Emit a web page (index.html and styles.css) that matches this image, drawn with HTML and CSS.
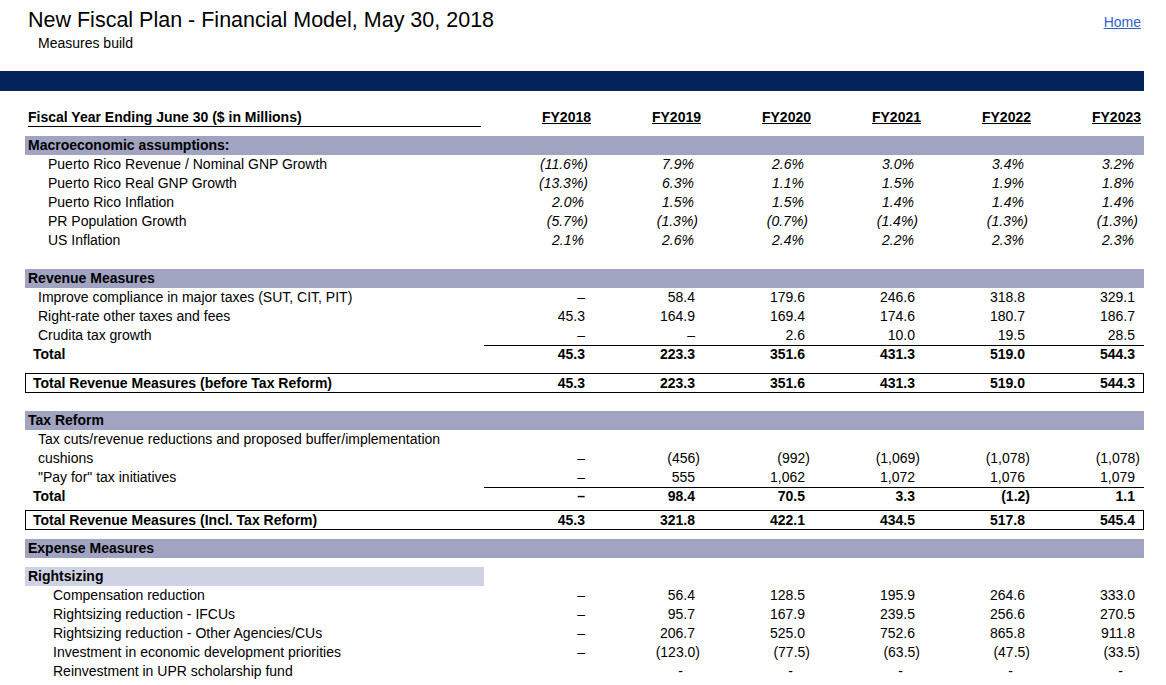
FILE: index.html
```html
<!DOCTYPE html>
<html lang="en">
<head>
<meta charset="utf-8">
<title>New Fiscal Plan - Financial Model</title>
<link rel="stylesheet" href="styles.css">
</head>
<body>
<div class="page">
  <header class="top">
    <div class="titles">
      <h1>New Fiscal Plan - Financial Model, May 30, 2018</h1>
      <p class="sub">Measures build</p>
    </div>
    <a class="home" href="#">Home</a>
  </header>
  <div class="bar"></div>

  <table class="model">
    <colgroup>
      <col class="c-label"><col class="c-num"><col class="c-num"><col class="c-num"><col class="c-num"><col class="c-num"><col class="c-num">
    </colgroup>
    <thead>
      <tr class="head">
        <th class="lab"><div class="rule">Fiscal Year Ending June 30 ($ in Millions)</div></th>
        <th class="fy">FY2018</th><th class="fy">FY2019</th><th class="fy">FY2020</th><th class="fy">FY2021</th><th class="fy">FY2022</th><th class="fy">FY2023</th>
      </tr>
    </thead>
    <tbody>
      <tr class="gap g9"><td colspan="7"></td></tr>
      <tr class="band"><td class="lab">Macroeconomic assumptions:</td><td></td><td></td><td></td><td></td><td></td><td></td></tr>
      <tr class="pct i2"><td class="lab">Puerto Rico Revenue / Nominal GNP Growth</td><td class="neg">(11.6%)</td><td>7.9%</td><td>2.6%</td><td>3.0%</td><td>3.4%</td><td>3.2%</td></tr>
      <tr class="pct i2"><td class="lab">Puerto Rico Real GNP Growth</td><td class="neg">(13.3%)</td><td>6.3%</td><td>1.1%</td><td>1.5%</td><td>1.9%</td><td>1.8%</td></tr>
      <tr class="pct i2"><td class="lab">Puerto Rico Inflation</td><td>2.0%</td><td>1.5%</td><td>1.5%</td><td>1.4%</td><td>1.4%</td><td>1.4%</td></tr>
      <tr class="pct i2"><td class="lab">PR Population Growth</td><td class="neg">(5.7%)</td><td class="neg">(1.3%)</td><td class="neg">(0.7%)</td><td class="neg">(1.4%)</td><td class="neg">(1.3%)</td><td class="neg">(1.3%)</td></tr>
      <tr class="pct i2"><td class="lab">US Inflation</td><td>2.1%</td><td>2.6%</td><td>2.4%</td><td>2.2%</td><td>2.3%</td><td>2.3%</td></tr>

      <tr class="gap g19"><td colspan="7"></td></tr>
      <tr class="band"><td class="lab">Revenue Measures</td><td></td><td></td><td></td><td></td><td></td><td></td></tr>
      <tr class="i1"><td class="lab">Improve compliance in major taxes (SUT, CIT, PIT)</td><td>–</td><td>58.4</td><td>179.6</td><td>246.6</td><td>318.8</td><td>329.1</td></tr>
      <tr class="i1"><td class="lab">Right-rate other taxes and fees</td><td>45.3</td><td>164.9</td><td>169.4</td><td>174.6</td><td>180.7</td><td>186.7</td></tr>
      <tr class="i1"><td class="lab">Crudita tax growth</td><td>–</td><td>–</td><td>2.6</td><td>10.0</td><td>19.5</td><td>28.5</td></tr>
      <tr class="total"><td class="lab">Total</td><td>45.3</td><td>223.3</td><td>351.6</td><td>431.3</td><td>519.0</td><td>544.3</td></tr>
      <tr class="gap g9"><td colspan="7"></td></tr>
      <tr class="boxed"><td class="lab">Total Revenue Measures (before Tax Reform)</td><td>45.3</td><td>223.3</td><td>351.6</td><td>431.3</td><td>519.0</td><td>544.3</td></tr>

      <tr class="gap g18"><td colspan="7"></td></tr>
      <tr class="band"><td class="lab">Tax Reform</td><td></td><td></td><td></td><td></td><td></td><td></td></tr>
      <tr class="i1 two"><td class="lab">Tax cuts/revenue reductions and proposed buffer/implementation<br>cushions</td><td>–</td><td class="neg">(456)</td><td class="neg">(992)</td><td class="neg">(1,069)</td><td class="neg">(1,078)</td><td class="neg">(1,078)</td></tr>
      <tr class="i1"><td class="lab">"Pay for" tax initiatives</td><td>–</td><td>555</td><td>1,062</td><td>1,072</td><td>1,076</td><td>1,079</td></tr>
      <tr class="total"><td class="lab">Total</td><td>–</td><td>98.4</td><td>70.5</td><td>3.3</td><td class="neg">(1.2)</td><td>1.1</td></tr>
      <tr class="gap g4"><td colspan="7"></td></tr>
      <tr class="boxed"><td class="lab">Total Revenue Measures (Incl. Tax Reform)</td><td>45.3</td><td>321.8</td><td>422.1</td><td>434.5</td><td>517.8</td><td>545.4</td></tr>

      <tr class="gap g9"><td colspan="7"></td></tr>
      <tr class="band"><td class="lab">Expense Measures</td><td></td><td></td><td></td><td></td><td></td><td></td></tr>
      <tr class="gap g9"><td colspan="7"></td></tr>
      <tr class="subband"><td class="lab">Rightsizing</td><td></td><td></td><td></td><td></td><td></td><td></td></tr>
      <tr class="i3"><td class="lab">Compensation reduction</td><td>–</td><td>56.4</td><td>128.5</td><td>195.9</td><td>264.6</td><td>333.0</td></tr>
      <tr class="i3"><td class="lab">Rightsizing reduction - IFCUs</td><td>–</td><td>95.7</td><td>167.9</td><td>239.5</td><td>256.6</td><td>270.5</td></tr>
      <tr class="i3"><td class="lab">Rightsizing reduction - Other Agencies/CUs</td><td>–</td><td>206.7</td><td>525.0</td><td>752.6</td><td>865.8</td><td>911.8</td></tr>
      <tr class="i3"><td class="lab">Investment in economic development priorities</td><td>–</td><td class="neg">(123.0)</td><td class="neg">(77.5)</td><td class="neg">(63.5)</td><td class="neg">(47.5)</td><td class="neg">(33.5)</td></tr>
      <tr class="i3"><td class="lab">Reinvestment in UPR scholarship fund</td><td></td><td class="nil">-</td><td class="nil">-</td><td class="nil">-</td><td class="nil">-</td><td class="nil">-</td></tr>
    </tbody>
  </table>
</div>
</body>
</html>
```

FILE: styles.css
```css
html, body {
  margin: 0;
  padding: 0;
  background: #ffffff;
}

body {
  font-family: "Liberation Sans", Arial, Helvetica, sans-serif;
  font-size: 14px;
  color: #000000;
}

.page {
  width: 1144px;
}

.top {
  display: flex;
  justify-content: space-between;
  align-items: flex-start;
  height: 71px;
  padding: 0 3px 0 28px;
  box-sizing: border-box;
}

.top h1 {
  margin: 8px 0 0;
  font-size: 21.5px;
  line-height: 24px;
  font-weight: normal;
}

.top .sub {
  margin: 3px 0 0 10px;
  font-size: 14px;
  line-height: 16px;
}

.home {
  margin-top: 14px;
  font-size: 14px;
  line-height: 16px;
  color: #2f63c8;
  text-decoration: underline;
}

.bar {
  height: 20px;
  background: #03235a;
}

.model {
  margin: 17px 0 0 25px;
  width: 1119px;
  table-layout: fixed;
  border-collapse: separate;
  border-spacing: 0;
  font-size: 14px;
}

.c-label { width: 459px; }
.c-num { width: 110px; }

.model th,
.model td {
  padding: 0 9px 0 0;
  height: 19px;
  line-height: 19px;
  text-align: right;
  white-space: nowrap;
  vertical-align: bottom;
  font-weight: normal;
}

.model .lab {
  text-align: left;
  padding: 0 3px 0 3px;
}

.model .neg { padding-right: 4px; }
.model .nil { padding-right: 21px; }

/* header row */
.head th { font-weight: bold; }
.head th.fy {
  text-decoration: underline;
  padding-right: 3px;
}
.head .rule {
  line-height: 17px;
  border-bottom: 1px solid #000;
}

/* spacers */
.gap td { padding: 0; line-height: 0; font-size: 0; }
.g4 td { height: 4px; }
.g9 td { height: 9px; }
.g18 td { height: 18px; }
.g19 td { height: 19px; }

/* section bands */
.band td { background: #a0a4c1; }
.band .lab { font-weight: bold; }
.subband .lab { background: #cfd2e3; font-weight: bold; }

/* indents */
.i1 .lab { padding-left: 13px; }
.i2 .lab { padding-left: 23px; }
.i3 .lab { padding-left: 28px; }

/* percentages */
.pct td { font-style: italic; padding-right: 10px; }
.pct td.lab { font-style: normal; padding-right: 3px; }
.pct td.neg { padding-right: 6px; }

/* wrapped label row */
.two td { height: 38px; }
.two .lab { white-space: normal; }

/* totals */
.total td { font-weight: bold; }
.total .lab { padding-left: 8px; }
.total td:not(.lab) { box-shadow: inset 0 1px 0 #000; }

.boxed td {
  font-weight: bold;
  height: 20px;
  line-height: 20px;
  box-shadow: inset 0 1px 0 #000, inset 0 -1px 0 #000;
}
.boxed .lab {
  padding-left: 8px;
  box-shadow: inset 1px 0 0 #000, inset 0 1px 0 #000, inset 0 -1px 0 #000;
}
.boxed td:last-child {
  box-shadow: inset -1px 0 0 #000, inset 0 1px 0 #000, inset 0 -1px 0 #000;
}
```
